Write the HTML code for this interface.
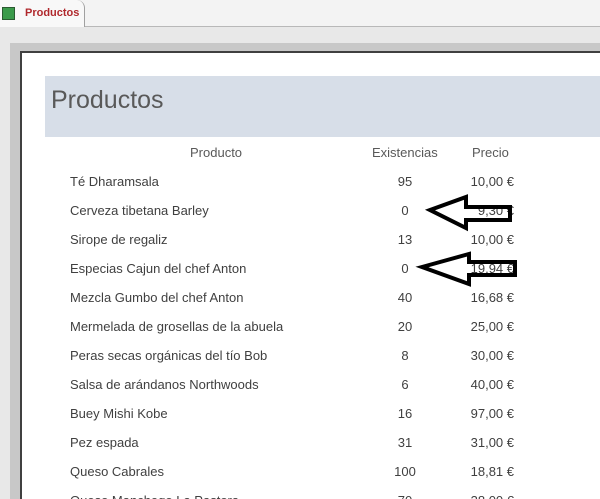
<!DOCTYPE html>
<html><head><meta charset="utf-8"><style>
html,body{margin:0;width:600px;height:499px;overflow:hidden}
body{background:#e8e8e8;font-family:"Liberation Sans",sans-serif;position:relative}
.tabbar{position:absolute;left:0;top:0;width:600px;height:26px;background:#f3f3f3;border-bottom:1px solid #b8b8b8}
.tab{position:absolute;left:0;top:0;width:84px;height:27px;background:#f8f8f8;border-right:1px solid #a0a0a0;border-radius:0 8px 0 0}
.tab span{position:absolute;left:25px;top:7px;font-size:11px;font-weight:bold;color:#b0282c}
.ico{position:absolute;left:2px;top:7px;width:11px;height:11px;background:#3a9a4a;border:1px solid #2a5a30}
.frame{position:absolute;left:10px;top:43px;width:600px;height:470px;background:#c8c8c8}
.page{position:absolute;left:20px;top:51px;width:600px;height:460px;background:#fff;border-left:2px solid #404040;border-top:2px solid #404040}
.band{position:absolute;left:45px;top:76px;width:555px;height:61px;background:#d7dee8}
.title{position:absolute;left:51px;top:86px;font-size:25px;color:#595959}
.t{position:absolute;font-size:13px;color:#404040;white-space:nowrap}
.h{color:#595959}
.c{width:60px;text-align:center;left:375px}
.p{width:80px;text-align:right;left:434px}
</style></head><body>
<div class="tabbar"><div class="tab"><div class="ico"></div><span>Productos</span></div></div>
<div class="frame"></div>
<div class="page"></div>
<div class="band"></div>
<div class="title">Productos</div>
<div class="t h" style="left:190px;top:145px">Producto</div>
<div class="t h" style="left:372px;top:145px">Existencias</div>
<div class="t h" style="left:472px;top:145px">Precio</div>
<div class="t" style="left:70px;top:174px">Té Dharamsala</div><div class="t c" style="top:174px">95</div><div class="t p" style="top:174px">10,00 €</div>
<div class="t" style="left:70px;top:203px">Cerveza tibetana Barley</div><div class="t c" style="top:203px">0</div><div class="t p" style="top:203px">9,30 €</div>
<div class="t" style="left:70px;top:232px">Sirope de regaliz</div><div class="t c" style="top:232px">13</div><div class="t p" style="top:232px">10,00 €</div>
<div class="t" style="left:70px;top:261px">Especias Cajun del chef Anton</div><div class="t c" style="top:261px">0</div><div class="t p" style="top:261px">19,94 €</div>
<div class="t" style="left:70px;top:290px">Mezcla Gumbo del chef Anton</div><div class="t c" style="top:290px">40</div><div class="t p" style="top:290px">16,68 €</div>
<div class="t" style="left:70px;top:319px">Mermelada de grosellas de la abuela</div><div class="t c" style="top:319px">20</div><div class="t p" style="top:319px">25,00 €</div>
<div class="t" style="left:70px;top:348px">Peras secas orgánicas del tío Bob</div><div class="t c" style="top:348px">8</div><div class="t p" style="top:348px">30,00 €</div>
<div class="t" style="left:70px;top:377px">Salsa de arándanos Northwoods</div><div class="t c" style="top:377px">6</div><div class="t p" style="top:377px">40,00 €</div>
<div class="t" style="left:70px;top:406px">Buey Mishi Kobe</div><div class="t c" style="top:406px">16</div><div class="t p" style="top:406px">97,00 €</div>
<div class="t" style="left:70px;top:435px">Pez espada</div><div class="t c" style="top:435px">31</div><div class="t p" style="top:435px">31,00 €</div>
<div class="t" style="left:70px;top:464px">Queso Cabrales</div><div class="t c" style="top:464px">100</div><div class="t p" style="top:464px">18,81 €</div>
<div class="t" style="left:70px;top:493px">Queso Manchego La Pastora</div><div class="t c" style="top:493px">70</div><div class="t p" style="top:493px">38,00 €</div>
<svg style="position:absolute;left:0;top:0" width="600" height="499">
<polygon points="430,210 466,197 466,207 510,207 510,220 466,220 466,228" fill="none" stroke="#000" stroke-width="4" stroke-linejoin="miter"/>
<polygon points="422,267 469,254 469,262 515,262 515,275 469,275 469,284" fill="none" stroke="#000" stroke-width="4" stroke-linejoin="miter"/>
</svg>
</body></html>
